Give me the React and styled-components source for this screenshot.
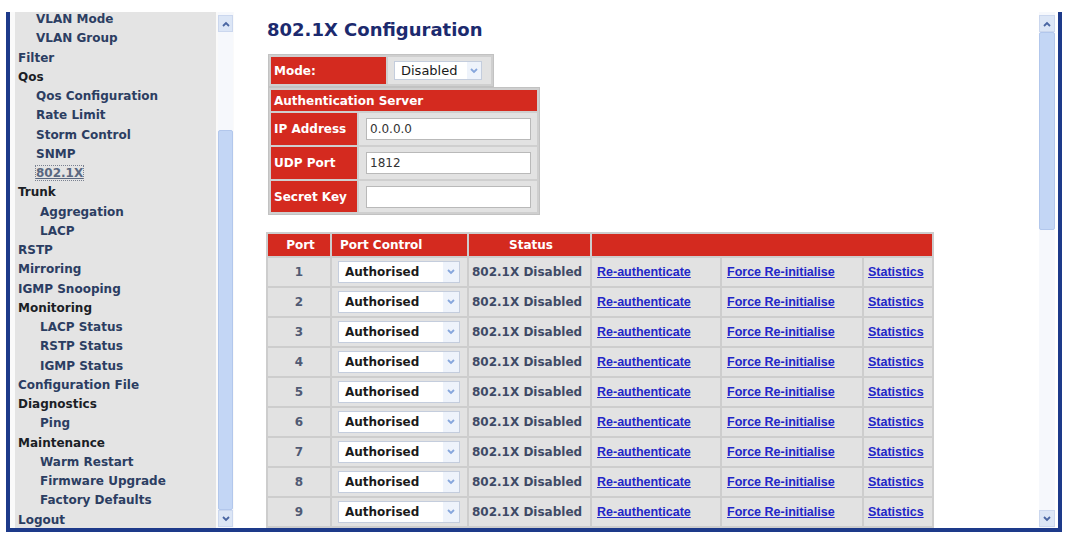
import React from 'react';
import styled, { createGlobalStyle } from 'styled-components';

const GlobalStyle = createGlobalStyle`
  html, body {
    margin: 0;
    padding: 0;
    background: #fff;
  }
  body {
    font-family: "DejaVu Sans", Verdana, sans-serif;
  }
`;

const menu = [
  { text: 'VLAN Mode', kind: 'sub', indent: 18 },
  { text: 'VLAN Group', kind: 'sub', indent: 18 },
  { text: 'Filter', kind: 'link' },
  { text: 'Qos', kind: 'group' },
  { text: 'Qos Configuration', kind: 'sub', indent: 18 },
  { text: 'Rate Limit', kind: 'sub', indent: 18 },
  { text: 'Storm Control', kind: 'sub', indent: 18 },
  { text: 'SNMP', kind: 'sub', indent: 18 },
  { text: '802.1X', kind: 'current', indent: 18 },
  { text: 'Trunk', kind: 'group' },
  { text: 'Aggregation', kind: 'sub', indent: 22 },
  { text: 'LACP', kind: 'sub', indent: 22 },
  { text: 'RSTP', kind: 'link' },
  { text: 'Mirroring', kind: 'link' },
  { text: 'IGMP Snooping', kind: 'link' },
  { text: 'Monitoring', kind: 'group' },
  { text: 'LACP Status', kind: 'sub', indent: 22 },
  { text: 'RSTP Status', kind: 'sub', indent: 22 },
  { text: 'IGMP Status', kind: 'sub', indent: 22 },
  { text: 'Configuration File', kind: 'link' },
  { text: 'Diagnostics', kind: 'group' },
  { text: 'Ping', kind: 'sub', indent: 22 },
  { text: 'Maintenance', kind: 'group' },
  { text: 'Warm Restart', kind: 'sub', indent: 22 },
  { text: 'Firmware Upgrade', kind: 'sub', indent: 22 },
  { text: 'Factory Defaults', kind: 'sub', indent: 22 },
  { text: 'Logout', kind: 'link' },
];

const navColors = {
  group: '#1b1e26',
  link: '#2b3d62',
  sub: '#2c3e62',
  current: '#5a6880',
};

const ports = [1, 2, 3, 4, 5, 6, 7, 8, 9];

const Chevron = ({ up }) => (
  <svg width="10" height="8" viewBox="0 0 10 8">
    <polyline
      points={up ? '2,6 5,3 8,6' : '2,2 5,5 8,2'}
      fill="none"
      stroke="#4a66a2"
      strokeWidth="1.8"
    />
  </svg>
);

const SelectArrow = () => (
  <svg width="10" height="8" viewBox="0 0 10 8">
    <polyline points="2,2 5,5 8,2" fill="none" stroke="#86a6dc" strokeWidth="1.8" />
  </svg>
);

const Scroller = ({ width, thumbOffset, thumbSize }) => (
  <ScrollBar $width={width}>
    <ScrollArrow>
      <Chevron up />
    </ScrollArrow>
    <Thumb $offset={thumbOffset} $size={thumbSize} />
    <Track />
    <ScrollArrow>
      <Chevron />
    </ScrollArrow>
  </ScrollBar>
);

const App = () => {
  return (
    <>
      <GlobalStyle />
      <Frame>
        <NavPane>
          <NavList>
            {menu.map((item) => (
              <NavItem key={item.text} $kind={item.kind} $indent={item.indent}>
                {item.kind === 'current' ? <Current>{item.text}</Current> : item.text}
              </NavItem>
            ))}
          </NavList>
          <Scroller width={15} thumbOffset={98} thumbSize={380} />
        </NavPane>

        <MainPane>
          <Content>
            <Title>802.1X Configuration</Title>

            <Grid $border>
              <tbody>
                <tr>
                  <Label $w={115} $h={27}>Mode:</Label>
                  <Field $w={103}>
                    <SelectBox $w={88} $h={19}>
                      <SelectText $plain>Disabled</SelectText>
                      <ArrowBox $w={14}>
                        <SelectArrow />
                      </ArrowBox>
                    </SelectBox>
                  </Field>
                </tr>
              </tbody>
            </Grid>

            <Grid $border>
              <tbody>
                <tr>
                  <Label colSpan={2} $h={21}>Authentication Server</Label>
                </tr>
                <tr>
                  <Label $w={86} $h={32}>IP Address</Label>
                  <Field $w={178}>
                    <TextInput defaultValue="0.0.0.0" readOnly />
                  </Field>
                </tr>
                <tr>
                  <Label $h={32}>UDP Port</Label>
                  <Field>
                    <TextInput defaultValue="1812" readOnly />
                  </Field>
                </tr>
                <tr>
                  <Label $h={31}>Secret Key</Label>
                  <Field>
                    <TextInput defaultValue="" readOnly />
                  </Field>
                </tr>
              </tbody>
            </Grid>

            <PortGrid>
              <thead>
                <tr>
                  <Label $w={62} $h={22} $align="center">Port</Label>
                  <Label $w={135} $pad={8}>Port Control</Label>
                  <Label $w={121} $align="center">Status</Label>
                  <Label colSpan={3} />
                </tr>
              </thead>
              <tbody>
                {ports.map((n) => (
                  <tr key={n}>
                    <PortNo $h={28}>{n}</PortNo>
                    <Field $pad={6}>
                      <SelectBox $w={122} $h={22}>
                        <SelectText>Authorised</SelectText>
                        <ArrowBox $w={16}>
                          <SelectArrow />
                        </ArrowBox>
                      </SelectBox>
                    </Field>
                    <Status>802.1X Disabled</Status>
                    <Field $w={128} $pad={5}>
                      <Action href="#">Re-authenticate</Action>
                    </Field>
                    <Field $w={140} $pad={5}>
                      <Action href="#">Force Re-initialise</Action>
                    </Field>
                    <Field $w={68} $pad={4}>
                      <Action href="#">Statistics</Action>
                    </Field>
                  </tr>
                ))}
              </tbody>
            </PortGrid>
          </Content>
          <Scroller width={16} thumbOffset={0} thumbSize={198} />
        </MainPane>
      </Frame>
    </>
  );
};

const Frame = styled.div`
  box-sizing: border-box;
  width: 1056px;
  height: 520px;
  margin: 12px 0 0 6px;
  border: 4px solid #1d3a8a;
  border-top: 0;
  display: flex;
  background: #fff;
  overflow: hidden;
`;

const NavPane = styled.div`
  box-sizing: border-box;
  width: 224px;
  flex-shrink: 0;
  display: flex;
  gap: 2px;
  padding: 0 1px 0 5px;
  background: #fafafa;
`;

const NavList = styled.ul`
  flex: 1;
  margin: 0;
  padding: 0 0 0 3px;
  list-style: none;
  background: #e4e4e4;
  overflow: hidden;

  & > li:first-child {
    margin-top: -2px;
  }
`;

const NavItem = styled.li`
  padding-left: ${({ $indent }) => $indent || 0}px;
  font: bold 12px/19.25px "DejaVu Sans", Verdana, sans-serif;
  color: ${({ $kind }) => navColors[$kind]};
  white-space: nowrap;
`;

const Current = styled.span`
  outline: 1px dotted #7a8190;
  text-decoration: underline;
`;

const ScrollBar = styled.div`
  box-sizing: border-box;
  width: ${({ $width }) => $width}px;
  flex-shrink: 0;
  display: flex;
  flex-direction: column;
  padding: 3px 0 1px;
  background: #f6f8fc;
`;

const ScrollArrow = styled.div`
  box-sizing: border-box;
  height: 17px;
  display: flex;
  align-items: center;
  justify-content: center;
  background: #dce6f6;
  border: 1px solid #cbd7ee;
`;

const Thumb = styled.div`
  box-sizing: border-box;
  margin-top: ${({ $offset }) => $offset}px;
  height: ${({ $size }) => $size}px;
  background: #c3d6f5;
  border: 1px solid #b2c7ec;
  border-radius: 2px;
`;

const Track = styled.div`
  flex: 1;
`;

const MainPane = styled.div`
  flex: 1;
  display: flex;
  padding-right: 3px;
`;

const Content = styled.div`
  flex: 1;
  overflow: hidden;
  padding: 7px 0 0 32px;
`;

const Title = styled.h1`
  margin: 0 0 13px 1px;
  font: bold 18px/22px "DejaVu Sans", Verdana, sans-serif;
  color: #1c2a6e;
`;

const Grid = styled.table`
  margin-left: 2px;
  border-collapse: separate;
  border-spacing: 2px;
  background: #cfcfcf;
  border: 1px solid #c2c2c2;
`;

const PortGrid = styled.table`
  margin-top: 17px;
  border-collapse: separate;
  border-spacing: 2px;
  background: #cdcdcd;
`;

const Label = styled.th`
  box-sizing: border-box;
  width: ${({ $w }) => ($w ? `${$w}px` : 'auto')};
  height: ${({ $h }) => ($h ? `${$h}px` : 'auto')};
  padding: 0 0 0 ${({ $pad }) => ($pad === undefined ? 3 : $pad)}px;
  background: #d42a1f;
  color: #fff;
  font: bold 12px "DejaVu Sans", Verdana, sans-serif;
  text-align: ${({ $align }) => $align || 'left'};
  white-space: nowrap;
`;

const Field = styled.td`
  box-sizing: border-box;
  width: ${({ $w }) => ($w ? `${$w}px` : 'auto')};
  padding: 0 0 0 ${({ $pad }) => ($pad === undefined ? 6 : $pad)}px;
  background: #e2e2e2;
  font: 12px/14px "DejaVu Sans", Verdana, sans-serif;
  white-space: nowrap;
`;

const PortNo = styled.td`
  box-sizing: border-box;
  height: ${({ $h }) => $h}px;
  padding: 0;
  background: #e2e2e2;
  text-align: center;
  font: bold 12px "DejaVu Sans", Verdana, sans-serif;
  color: #505a74;
`;

const Status = styled.td`
  padding: 0 0 0 3px;
  background: #e2e2e2;
  font: bold 12px "DejaVu Sans", Verdana, sans-serif;
  color: #3e4a66;
  white-space: nowrap;
`;

const SelectBox = styled.div`
  box-sizing: border-box;
  width: ${({ $w }) => $w}px;
  height: ${({ $h }) => $h}px;
  display: flex;
  align-items: center;
  background: #fff;
  border: 1px solid #c4cddd;
`;

const SelectText = styled.span`
  flex: 1;
  padding-left: 6px;
  font: ${({ $plain }) => ($plain ? '13px' : 'bold 12px')} "DejaVu Sans", Verdana, sans-serif;
  color: #1a1a1a;
`;

const ArrowBox = styled.span`
  width: ${({ $w }) => $w}px;
  align-self: stretch;
  display: flex;
  align-items: center;
  justify-content: center;
  background: #eef3fb;
`;

const TextInput = styled.input`
  box-sizing: border-box;
  width: 165px;
  height: 22px;
  margin: 0 0 0 1px;
  padding: 0 3px;
  border: 1px solid #b9b9b9;
  background: #fff;
  font: 12px "DejaVu Sans", Verdana, sans-serif;
  color: #333;
  outline: none;
  vertical-align: middle;
`;

const Action = styled.a`
  font: bold 12.5px/14px "Liberation Sans", Arial, sans-serif;
  color: #2226c8;
  text-decoration: underline;
`;

export default App;
